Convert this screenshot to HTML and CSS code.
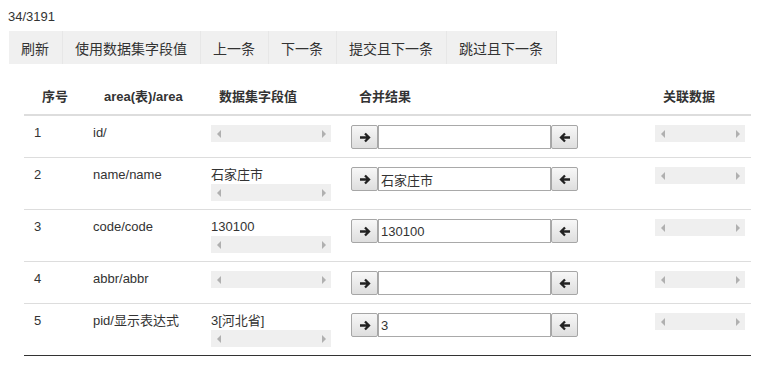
FILE: index.html
```html
<!DOCTYPE html>
<html lang="zh-CN">
<head>
  <meta charset="UTF-8" />
  <title>合并数据</title>
  <link rel="stylesheet" href="styles.css">
</head>
<body>
  <div class="counter">34/3191</div>
  <div class="toolbar">
    <button class="tool">刷新</button>
    <button class="tool">使用数据集字段值</button>
    <button class="tool">上一条</button>
    <button class="tool">下一条</button>
    <button class="tool">提交且下一条</button>
    <button class="tool">跳过且下一条</button>
  </div>

  <table class="merge">
    <colgroup>
      <col class="c-no">
      <col class="c-field">
      <col class="c-value">
      <col class="c-result">
      <col class="c-rel">
    </colgroup>
    <thead>
      <tr>
        <th class="th-no">序号</th>
        <th class="th-field">area(表)/area</th>
        <th>数据集字段值</th>
        <th>合并结果</th>
        <th>关联数据</th>
      </tr>
    </thead>
    <tbody>
      <tr>
        <td class="num">1</td>
        <td>id/</td>
        <td><div class="hscroll"></div></td>
        <td>
          <div class="merge-group">
            <button class="arrow"><svg viewBox="0 0 12 10"><path d="M1 5h9M6 1l4 4-4 4"/></svg></button>
            <input class="merge-input" type="text" value="">
            <button class="arrow"><svg viewBox="0 0 12 10"><path d="M11 5H2M6 1L2 5l4 4"/></svg></button>
          </div>
        </td>
        <td><div class="hscroll small"></div></td>
      </tr>
      <tr>
        <td class="num">2</td>
        <td>name/name</td>
        <td><div class="val">石家庄市</div><div class="hscroll"></div></td>
        <td>
          <div class="merge-group">
            <button class="arrow"><svg viewBox="0 0 12 10"><path d="M1 5h9M6 1l4 4-4 4"/></svg></button>
            <input class="merge-input" type="text" value="石家庄市">
            <button class="arrow"><svg viewBox="0 0 12 10"><path d="M11 5H2M6 1L2 5l4 4"/></svg></button>
          </div>
        </td>
        <td><div class="hscroll small"></div></td>
      </tr>
      <tr>
        <td class="num">3</td>
        <td>code/code</td>
        <td><div class="val">130100</div><div class="hscroll"></div></td>
        <td>
          <div class="merge-group">
            <button class="arrow"><svg viewBox="0 0 12 10"><path d="M1 5h9M6 1l4 4-4 4"/></svg></button>
            <input class="merge-input" type="text" value="130100">
            <button class="arrow"><svg viewBox="0 0 12 10"><path d="M11 5H2M6 1L2 5l4 4"/></svg></button>
          </div>
        </td>
        <td><div class="hscroll small"></div></td>
      </tr>
      <tr>
        <td class="num">4</td>
        <td>abbr/abbr</td>
        <td><div class="hscroll"></div></td>
        <td>
          <div class="merge-group">
            <button class="arrow"><svg viewBox="0 0 12 10"><path d="M1 5h9M6 1l4 4-4 4"/></svg></button>
            <input class="merge-input" type="text" value="">
            <button class="arrow"><svg viewBox="0 0 12 10"><path d="M11 5H2M6 1L2 5l4 4"/></svg></button>
          </div>
        </td>
        <td><div class="hscroll small"></div></td>
      </tr>
      <tr>
        <td class="num">5</td>
        <td>pid/显示表达式</td>
        <td><div class="val">3[河北省]</div><div class="hscroll"></div></td>
        <td>
          <div class="merge-group">
            <button class="arrow"><svg viewBox="0 0 12 10"><path d="M1 5h9M6 1l4 4-4 4"/></svg></button>
            <input class="merge-input" type="text" value="3">
            <button class="arrow"><svg viewBox="0 0 12 10"><path d="M11 5H2M6 1L2 5l4 4"/></svg></button>
          </div>
        </td>
        <td><div class="hscroll small"></div></td>
      </tr>
    </tbody>
  </table>
</body>
</html>
```

FILE: styles.css
```css
body {
  font-family: "Liberation Sans", Arial, "Noto Sans CJK SC", sans-serif;
  font-size: 13px;
  color: #333;
  background: #fff;
  margin: 8px;
}
.counter {
  line-height: 17px;
  margin-bottom: 6px;
}
.toolbar {
  display: flex;
  padding-left: 1px;
}
.tool {
  font-family: inherit;
  font-size: 14px;
  color: #333;
  height: 33px;
  padding: 0 13px 0 12px;
  background: #f0f0f0;
  border: none;
  border-right: 1px solid #e7e7e7;
  margin: 0;
  cursor: pointer;
}
.tool:last-child {
  border-right: 1px solid #e4e4e4;
}
.merge {
  border-collapse: collapse;
  table-layout: fixed;
  width: 730px;
  margin: 16px 0 0 16px;
  border-bottom: 1px solid #333;
}
.c-no { width: 61px; }
.c-field { width: 118px; }
.c-value { width: 140px; }
.c-result { width: 304px; }
.c-rel { width: 107px; }
th {
  font-weight: bold;
  text-align: left;
  line-height: 18px;
  padding: 8px 8px 8px 16px;
  border-bottom: 2px solid #ddd;
  white-space: nowrap;
}
.th-no { padding-left: 18px; }
.th-field { padding-left: 19px; }
td {
  vertical-align: top;
  line-height: 18px;
  padding: 8px;
  border-top: 1px solid #ddd;
  white-space: nowrap;
}
tbody tr:first-child td {
  border-top: none;
}
td.num {
  padding-left: 10px;
}
.val {
  line-height: 17px;
}
.hscroll {
  width: 120px;
  height: 17px;
  margin-top: 1px;
  background: #efefef;
  display: flex;
  justify-content: space-between;
  align-items: center;
  padding: 0 5px 0 6px;
  box-sizing: border-box;
}
.hscroll.small {
  width: 90px;
}
.hscroll::before {
  content: "";
  border-right: 4px solid #b0b0b0;
  border-top: 4px solid transparent;
  border-bottom: 4px solid transparent;
}
.hscroll::after {
  content: "";
  border-left: 4px solid #b0b0b0;
  border-top: 4px solid transparent;
  border-bottom: 4px solid transparent;
}
.merge-group {
  display: flex;
  margin-top: 1px;
}
.arrow {
  width: 27px;
  height: 24px;
  padding: 0;
  margin: 0;
  border: 1px solid #a6a6a6;
  border-radius: 2px;
  background: linear-gradient(#f7f7f7, #dedede);
  display: flex;
  align-items: center;
  justify-content: center;
  cursor: pointer;
}
.arrow svg {
  width: 12px;
  height: 11px;
  fill: none;
  stroke: #222;
  stroke-width: 2.3;
}
.merge-input {
  width: 173px;
  height: 24px;
  box-sizing: border-box;
  margin: 0;
  border: 1px solid #a9a9a9;
  padding: 0 2px;
  font-family: inherit;
  font-size: 13px;
  color: #333;
}
```
